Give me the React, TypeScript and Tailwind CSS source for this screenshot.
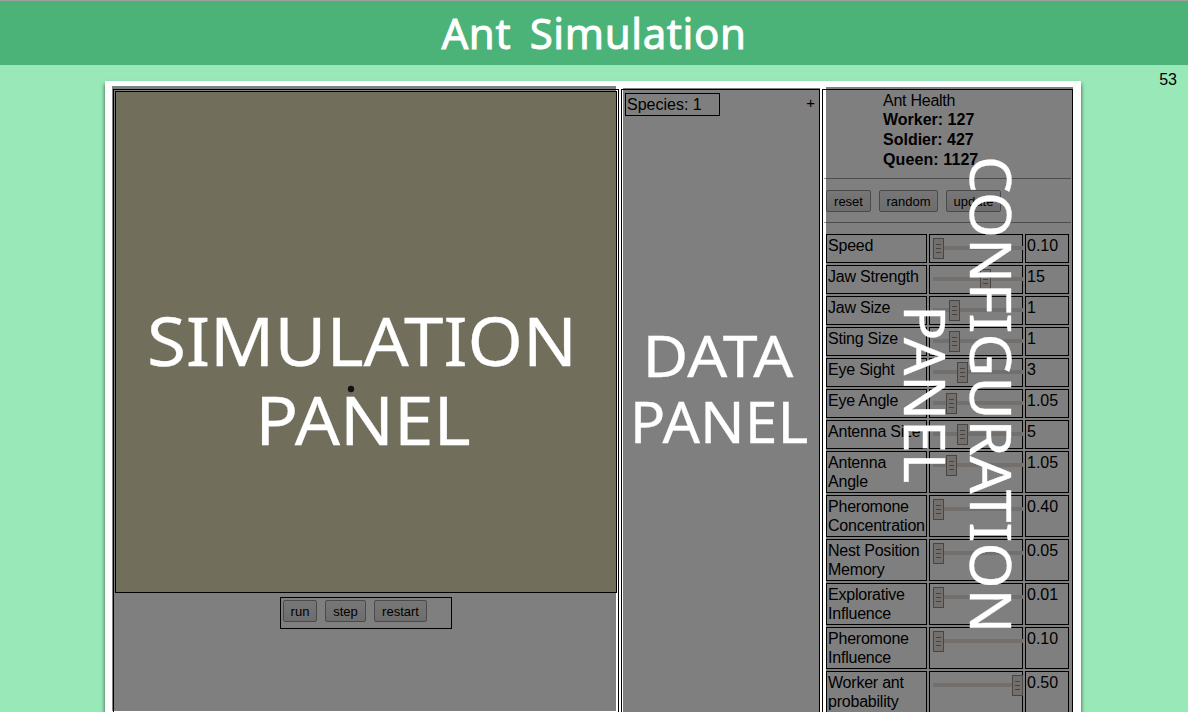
import React from "react";

type Trait = { name: string; value: string; thumb: number; tall?: boolean };

const traits: Trait[] = [
  { name: "Speed", value: "0.10", thumb: 0 },
  { name: "Jaw Strength", value: "15", thumb: 47 },
  { name: "Jaw Size", value: "1", thumb: 16 },
  { name: "Sting Size", value: "1", thumb: 16 },
  { name: "Eye Sight", value: "3", thumb: 24 },
  { name: "Eye Angle", value: "1.05", thumb: 13 },
  { name: "Antenna Size", value: "5", thumb: 24 },
  { name: "Antenna Angle", value: "1.05", thumb: 13, tall: true },
  { name: "Pheromone Concentration", value: "0.40", thumb: 0, tall: true },
  { name: "Nest Position Memory", value: "0.05", thumb: 0, tall: true },
  { name: "Explorative Influence", value: "0.01", thumb: 0, tall: true },
  { name: "Pheromone Influence", value: "0.10", thumb: 0, tall: true },
  { name: "Worker ant probability", value: "0.50", thumb: 79, tall: true },
];

function Button({ label, width }: { label: string; width: string }) {
  return (
    <button
      className={`h-[22px] shrink-0 rounded-[2px] border border-[#949494] bg-linear-to-b from-[#eeeeee] to-[#dadada] pt-px text-center text-[13px] leading-[19px] text-black ${width}`}
    >
      {label}
    </button>
  );
}

function Slider({ thumb }: { thumb: number }) {
  return (
    <div className="relative mt-[3px] ml-[3px] h-[21px] w-[90px]">
      <div className="absolute top-[8px] left-0 h-[4px] w-[90px] bg-[#e4dfda]" />
      <div
        className="absolute top-0 flex h-[21px] w-[11px] flex-col items-center justify-center gap-[3px] border border-[#908b86] bg-[#e4dfda]"
        style={{ left: thumb }}
      >
        <i className="h-px w-[5px] bg-[#8a8580]" />
        <i className="h-px w-[5px] bg-[#8a8580]" />
        <i className="h-px w-[5px] bg-[#8a8580]" />
      </div>
    </div>
  );
}

function TraitRow({ trait }: { trait: Trait }) {
  return (
    <div className={trait.tall ? "flex h-[42px] gap-[2px]" : "flex h-[29px] gap-[2px]"}>
      <div className="w-[101px] border border-black p-px leading-[19px] tracking-[-0.22px]">{trait.name}</div>
      <div className="w-[94px] border border-black">
        <Slider thumb={trait.thumb} />
      </div>
      <div className="w-[44px] border border-black p-px leading-[19px]">{trait.value}</div>
    </div>
  );
}

const label = "absolute whitespace-nowrap font-['Noto_Sans',sans-serif] text-white leading-none [-webkit-text-stroke:0.3px_white]";

function SimulationPanel() {
  return (
    <section className="relative h-[640px] w-[506px] border border-black p-px">
      <div className="relative h-[502px] w-[502px] border border-black bg-[#e3dcb9]">
        <svg className="absolute top-[293px] left-[231px]" width="8" height="8" viewBox="0 0 8 8">
          <circle cx="4" cy="4" r="3.2" fill="#222" />
        </svg>
      </div>
      <div className="mt-[4px] ml-[165px] flex h-[32px] w-[172px] gap-[8px] border border-black pt-[2px] pl-[2px]">
        <Button label="run" width="w-[34px]" />
        <Button label="step" width="w-[41px]" />
        <Button label="restart" width="w-[53px]" />
      </div>
      <div className="absolute -top-[4px] -left-[2px] h-[625px] w-[504px] bg-black/50">
        <div className={`${label} top-[221px] left-[249.5px] -translate-x-1/2 scale-x-[1.06] text-[67px]`}>SIMULATION</div>
        <div className={`${label} top-[300px] left-[251px] -translate-x-1/2 scale-x-[1.06] text-[67px]`}>PANEL</div>
      </div>
    </section>
  );
}

function DataPanel() {
  return (
    <section className="relative h-[640px] w-[199px] border border-black">
      <div className="flex justify-between pt-[3px] pr-[4px] pl-[3px]">
        <div className="h-[23px] w-[95px] border border-black pt-px pl-px leading-[20px]">Species: 1</div>
        <div className="pt-[2px] text-[15px] leading-[16px]">+</div>
      </div>
      <div className="absolute -top-[2px] left-px h-[640px] w-[197px] bg-black/50">
        <div className={`${label} top-[239px] left-[95px] -translate-x-1/2 scale-x-[1.12] text-[56px]`}>DATA</div>
        <div className={`${label} top-[305px] left-[96px] -translate-x-1/2 scale-x-[1.05] text-[56px]`}>PANEL</div>
      </div>
    </section>
  );
}

function ConfigurationPanel() {
  return (
    <section className="relative h-[640px] w-[251px] border border-black">
      <div className="ml-[60px] h-[88px] pt-px leading-[19px]">
        <div className="tracking-[-0.25px]">Ant Health</div>
        <div className="font-bold leading-[20px]">
          <div>Worker: 127</div>
          <div>Soldier: 427</div>
          <div className="tracking-[0.1px]">Queen: 1127</div>
        </div>
      </div>
      <div className="ml-px h-px w-[247px] bg-[#9a9a9a]" />
      <div className="flex h-[43px] gap-[8px] pt-[11px] pl-[3px]">
        <Button label="reset" width="w-[45px]" />
        <Button label="random" width="w-[59px]" />
        <Button label="update" width="w-[55px]" />
      </div>
      <div className="ml-px h-px w-[247px] bg-[#9a9a9a]" />
      <div className="mt-[11px] ml-[3px] flex flex-col gap-[2px]">
        {traits.map((t) => (
          <TraitRow key={t.name} trait={t} />
        ))}
      </div>
      <div className="absolute -top-[3px] left-[3px] h-[640px] w-[247px] bg-black/50">
        <div className={`${label} top-[68.5px] left-[138px] origin-top scale-y-[1.053] text-[56px] [writing-mode:vertical-rl]`}>
          CONFIGURATION
        </div>
        <div className={`${label} top-[218px] left-[72px] origin-top scale-y-[1.05] text-[56px] [writing-mode:vertical-rl]`}>
          PANEL
        </div>
      </div>
    </section>
  );
}

export default function App() {
  return (
    <div className="relative h-[712px] w-[1188px] overflow-hidden bg-[#98e8b8] font-['Liberation_Sans',Arial,sans-serif] text-[16px] text-black">
      <header className="flex h-[65px] justify-center border-t border-[#a0a0a0] bg-[#4bb377]">
        <h1 className="font-['Noto_Sans',sans-serif] text-[42px] leading-[64px] tracking-[0.6px] text-white [word-spacing:7px] [-webkit-text-stroke:0.9px_white] [stroke-linejoin:round]">
          Ant Simulation
        </h1>
      </header>
      <div className="absolute top-[70px] right-[11px] leading-[19px]">53</div>
      <main className="mt-[16px] ml-[105px] flex h-[660px] w-[976px] bg-white pt-[8px] pl-[8px] shadow-[0_3px_4px_rgba(0,0,0,0.65)]">
        <SimulationPanel />
        <div className="ml-[2px]">
          <DataPanel />
        </div>
        <div className="ml-[2px]">
          <ConfigurationPanel />
        </div>
      </main>
    </div>
  );
}
